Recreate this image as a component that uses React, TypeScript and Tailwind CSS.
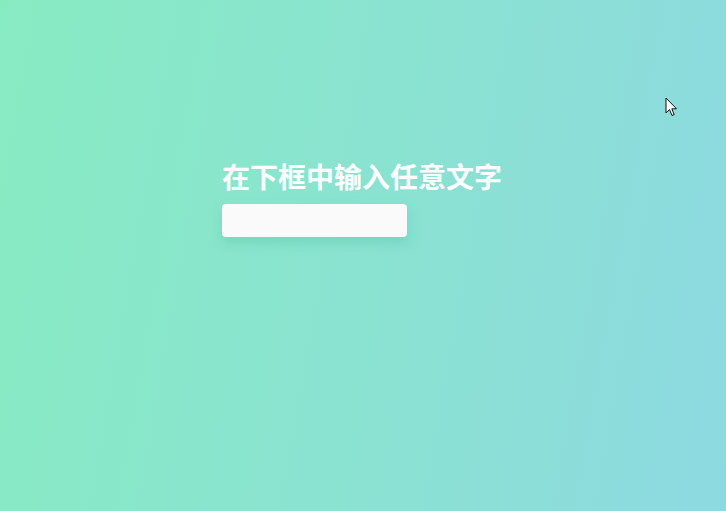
export default function App() {
  return (
    <div className="relative h-[511px] w-full overflow-hidden bg-[linear-gradient(100deg,#87ebc2_0%,#8bdfd6_70%,#8dd9e1_100%)] font-['Noto_Sans_CJK_SC',sans-serif]">
      <div className="mx-auto flex w-fit flex-col items-start pr-[2px] pt-[158px]">
        <h1 className="text-[28px] font-bold leading-[36px] text-white">在下框中输入任意文字</h1>
        <input
          type="text"
          className="mt-[10px] h-[33px] w-[185px] rounded-[4px] bg-[#fafafa] px-2 text-sm shadow-[0_6px_12px_rgba(80,190,160,0.35)] outline-none"
        />
      </div>

      {/* mouse pointer */}
      <svg className="absolute left-[665px] top-[97px]" width="14" height="22" viewBox="0 0 14 22">
        <path
          d="M1 1 L1 16 L4.5 12.5 L7 18.5 L9.2 17.6 L6.8 11.8 L11.5 11.8 Z"
          fill="#fff"
          stroke="#111"
          strokeWidth="1"
          strokeLinejoin="round"
        />
      </svg>
    </div>
  );
}
